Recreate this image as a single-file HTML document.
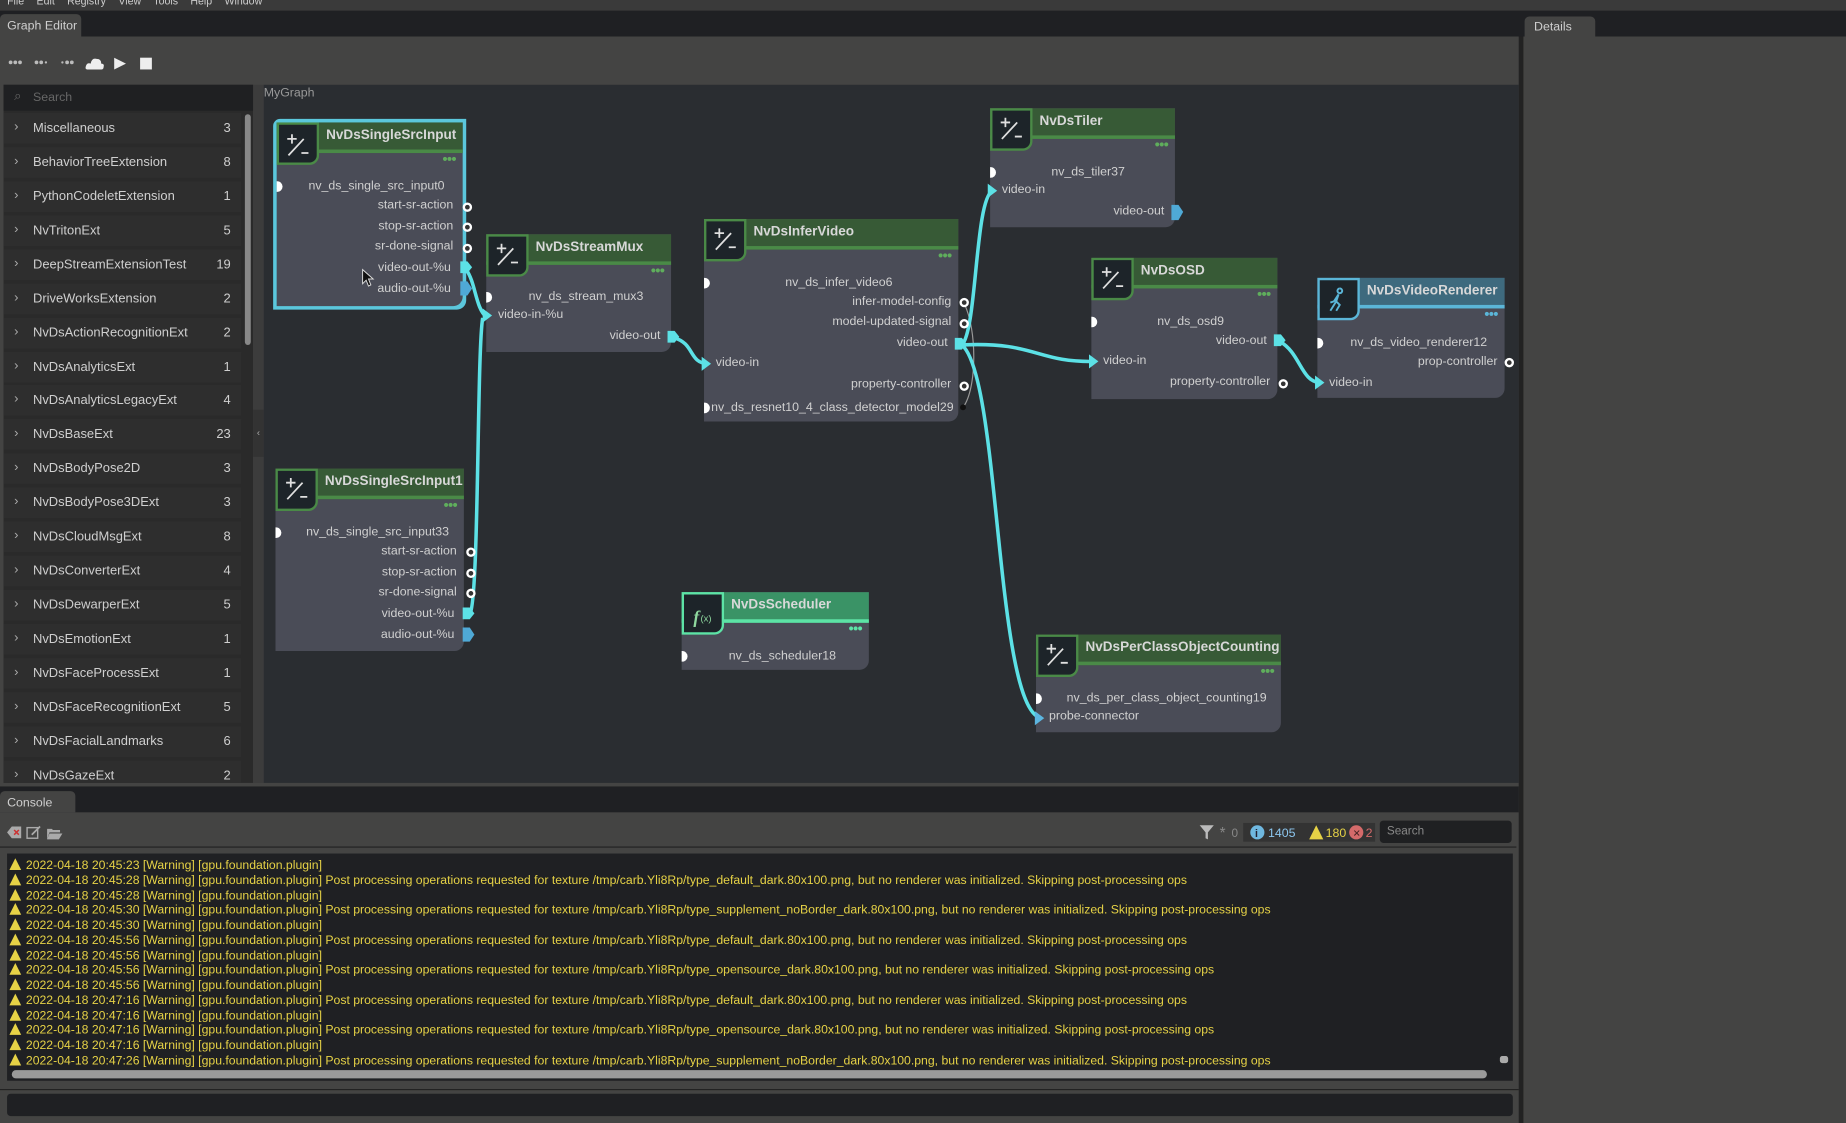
<!DOCTYPE html>
<html><head><meta charset="utf-8"><style>
html,body{margin:0;padding:0;width:1846px;height:1123px;overflow:hidden;background:#444443}
#w{position:absolute;left:0;top:0;width:1568px;height:954px;transform:scale(1.17730);transform-origin:0 0;font-family:"Liberation Sans",sans-serif;color:#cfcfcf;font-size:11px}
.a{position:absolute}
.it{position:absolute;left:3px;width:202px;height:26px;background:#2e2e2e;font-size:11px;color:#cfcfcf}
.it .c{position:absolute;left:9px;top:6px;color:#aaa}
.it .n{position:absolute;left:25px;top:7px}
.it .v{position:absolute;right:9px;top:7px}
.node{position:absolute;background:#4a4c57;border-radius:0 0 8px 0}
.hd{position:absolute;left:0;top:0;right:0;height:23px;background:#375a36;border-bottom:3px solid #4a8a47;color:#d8d8d8;font-weight:bold;font-size:11.5px}
.hd span{position:absolute;left:42px;top:5px}
.ic{position:absolute;left:0;top:0;width:32px;height:32px;background:#1d2429;border:2px solid #4a8a47;border-radius:0 0 8px 0}
.dots{position:absolute;right:6px;top:26px;color:#5fae5c;font-size:8px;letter-spacing:-1px}
.r{position:absolute;font-size:10.5px;color:#d0d0d0;white-space:nowrap}
.rt{text-align:right}
.hi{position:absolute;width:5px;height:9px;background:#fff;border-radius:0 5px 5px 0}
.log{white-space:nowrap;color:#e6d246;font-size:10.4px}
.log div{height:12.77px;line-height:12.77px;overflow:visible}
.log b{display:inline-block;width:0;height:0;border-left:5px solid transparent;border-right:5px solid transparent;border-bottom:10px solid #e6d246;margin-right:4px;vertical-align:-1px}
</style></head><body><div id="w">
<div class="a" style="left:0;top:0;width:1568px;height:9px;background:#3a3a3a;overflow:hidden;font-size:9px;color:#ccc"><span class="a" style="left:6px;top:-4px;word-spacing:8px">File Edit Registry View Tools Help Window</span></div>
<div class="a" style="left:0;top:9px;width:1568px;height:22px;background:#1f2023"></div>
<div class="a" style="left:0;top:12px;width:69px;height:19px;background:#444443;border-radius:4px 4px 0 0"><span class="a" style="left:6px;top:4px;font-size:10.5px">Graph Editor</span></div>
<div class="a" style="left:1295px;top:14px;width:60px;height:17px;background:#444443;border-radius:4px 4px 0 0"><span class="a" style="left:8px;top:3px;font-size:10.5px">Details</span></div>
<div class="a" style="left:1290px;top:31px;width:4px;height:923px;background:#222"></div>
<svg class="a" style="left:6px;top:47px" width="130" height="14">
<g fill="#bbb"><circle cx="3" cy="6" r="1.6"/><circle cx="7" cy="6" r="1.6"/><circle cx="11" cy="6" r="1.6"/><circle cx="25" cy="6" r="1.6"/><circle cx="29" cy="6" r="1.6"/><circle cx="33" cy="6" r="1" /><circle cx="47" cy="6" r="1"/><circle cx="51" cy="6" r="1.6"/><circle cx="55" cy="6" r="1.6"/></g>
<path d="M68 12 Q66 12 67 9 Q68 6 71 7 Q72 2 76 3 Q80 3 80 7 Q83 7 82 10 Q82 12 80 12Z" fill="#eee"/><path d="M91 2 L101 7 L91 12Z" fill="#eee"/><rect x="113" y="2" width="10" height="10" fill="#eee"/></svg>
<div class="a" style="left:3px;top:72px;width:212px;height:593px;background:#2a2a2a"></div>
<div class="a" style="left:3px;top:72px;width:212px;height:22px;background:#1f2022"><span class="a" style="left:9px;top:4px;color:#666;font-size:11px">⌕</span><span class="a" style="left:25px;top:5px;color:#666;font-size:10.5px">Search</span></div>
<div class="a" style="left:208px;top:97px;width:5px;height:196px;background:#888;border-radius:3px"></div>
<div class="a" style="left:215px;top:72px;width:9px;height:593px;background:#3c3c3c"></div>
<div class="a" style="left:215px;top:348px;width:9px;height:40px;background:#333;color:#aaa;font-size:8px;text-align:center;line-height:40px">‹</div>
<div class="it" style="top:96px"><span class="c">›</span><span class="n">Miscellaneous</span><span class="v">3</span></div>
<div class="it" style="top:125px"><span class="c">›</span><span class="n">BehaviorTreeExtension</span><span class="v">8</span></div>
<div class="it" style="top:154px"><span class="c">›</span><span class="n">PythonCodeletExtension</span><span class="v">1</span></div>
<div class="it" style="top:183px"><span class="c">›</span><span class="n">NvTritonExt</span><span class="v">5</span></div>
<div class="it" style="top:212px"><span class="c">›</span><span class="n">DeepStreamExtensionTest</span><span class="v">19</span></div>
<div class="it" style="top:241px"><span class="c">›</span><span class="n">DriveWorksExtension</span><span class="v">2</span></div>
<div class="it" style="top:270px"><span class="c">›</span><span class="n">NvDsActionRecognitionExt</span><span class="v">2</span></div>
<div class="it" style="top:299px"><span class="c">›</span><span class="n">NvDsAnalyticsExt</span><span class="v">1</span></div>
<div class="it" style="top:327px"><span class="c">›</span><span class="n">NvDsAnalyticsLegacyExt</span><span class="v">4</span></div>
<div class="it" style="top:356px"><span class="c">›</span><span class="n">NvDsBaseExt</span><span class="v">23</span></div>
<div class="it" style="top:385px"><span class="c">›</span><span class="n">NvDsBodyPose2D</span><span class="v">3</span></div>
<div class="it" style="top:414px"><span class="c">›</span><span class="n">NvDsBodyPose3DExt</span><span class="v">3</span></div>
<div class="it" style="top:443px"><span class="c">›</span><span class="n">NvDsCloudMsgExt</span><span class="v">8</span></div>
<div class="it" style="top:472px"><span class="c">›</span><span class="n">NvDsConverterExt</span><span class="v">4</span></div>
<div class="it" style="top:501px"><span class="c">›</span><span class="n">NvDsDewarperExt</span><span class="v">5</span></div>
<div class="it" style="top:530px"><span class="c">›</span><span class="n">NvDsEmotionExt</span><span class="v">1</span></div>
<div class="it" style="top:559px"><span class="c">›</span><span class="n">NvDsFaceProcessExt</span><span class="v">1</span></div>
<div class="it" style="top:588px"><span class="c">›</span><span class="n">NvDsFaceRecognitionExt</span><span class="v">5</span></div>
<div class="it" style="top:617px"><span class="c">›</span><span class="n">NvDsFacialLandmarks</span><span class="v">6</span></div>
<div class="it" style="top:646px;height:19px"><span class="c">›</span><span class="n">NvDsGazeExt</span><span class="v">2</span></div>
<div class="a" style="left:224px;top:72px;width:1066px;height:593px;background:#2a2d31"><span class="a" style="left:0;top:1px;color:#999;font-size:10.5px">MyGraph</span></div>

<div class="node" style="left:232px;top:101px;width:164px;height:162px;background:#5bc7dc;border-radius:6px 0 8px 0"></div>
<div class="node" style="left:235px;top:104px;width:158px;height:156px">
<div class="hd"><span>NvDsSingleSrcInput</span></div><div class="ic"></div><div class="dots">●●●</div>
<div class="hi" style="left:0;top:50px"></div><div class="r" style="left:27px;top:48px">nv_ds_single_src_input0</div>
<div class="r rt" style="right:8px;top:64px">start-sr-action</div>
<div class="r rt" style="right:8px;top:82px">stop-sr-action</div>
<div class="r rt" style="right:8px;top:99px">sr-done-signal</div>
<div class="r rt" style="right:10px;top:117px">video-out-%u</div>
<div class="r rt" style="right:10px;top:135px">audio-out-%u</div>
</div>
<div class="node" style="left:413px;top:199px;width:157px;height:100px">
<div class="hd"><span>NvDsStreamMux</span></div><div class="ic"></div><div class="dots">●●●</div>
<div class="hi" style="left:0;top:49px"></div><div class="r" style="left:36px;top:47px">nv_ds_stream_mux3</div>
<div class="r" style="left:10px;top:62px">video-in-%u</div>
<div class="r rt" style="right:9px;top:80px">video-out</div>
</div>
<div class="node" style="left:598px;top:186px;width:216px;height:172px">
<div class="hd"><span>NvDsInferVideo</span></div><div class="ic"></div><div class="dots">●●●</div>
<div class="hi" style="left:0;top:50px"></div><div class="r" style="left:69px;top:48px">nv_ds_infer_video6</div>
<div class="r rt" style="right:6px;top:64px">infer-model-config</div>
<div class="r rt" style="right:6px;top:81px">model-updated-signal</div>
<div class="r rt" style="right:9px;top:99px">video-out</div>
<div class="r" style="left:10px;top:116px">video-in</div>
<div class="r rt" style="right:6px;top:134px">property-controller</div>
<div class="hi" style="left:0;top:156px"></div><div class="r" style="left:6px;top:154px">nv_ds_resnet10_4_class_detector_model29</div>
</div>
<div class="node" style="left:841px;top:92px;width:157px;height:101px">
<div class="hd"><span>NvDsTiler</span></div><div class="ic"></div><div class="dots">●●●</div>
<div class="hi" style="left:0;top:50px"></div><div class="r" style="left:52px;top:48px">nv_ds_tiler37</div>
<div class="r" style="left:10px;top:63px">video-in</div>
<div class="r rt" style="right:9px;top:81px">video-out</div>
</div>
<div class="node" style="left:927px;top:219px;width:158px;height:120px">
<div class="hd"><span>NvDsOSD</span></div><div class="ic"></div><div class="dots">●●●</div>
<div class="hi" style="left:0;top:50px"></div><div class="r" style="left:56px;top:48px">nv_ds_osd9</div>
<div class="r rt" style="right:9px;top:64px">video-out</div>
<div class="r" style="left:10px;top:81px">video-in</div>
<div class="r rt" style="right:6px;top:99px">property-controller</div>
</div>
<div class="node" style="left:1119px;top:236px;width:159px;height:102px">
<div class="hd" style="background:#3e6a7e;border-bottom-color:#5bb6d8"><span>NvDsVideoRenderer</span></div><div class="ic" style="border-color:#5bb6d8"></div><div class="dots" style="color:#5bb6d8">●●●</div>
<div class="hi" style="left:0;top:51px"></div><div class="r" style="left:28px;top:49px">nv_ds_video_renderer12</div>
<div class="r rt" style="right:6px;top:65px">prop-controller</div>
<div class="r" style="left:10px;top:83px">video-in</div>
</div>
<div class="node" style="left:234px;top:398px;width:160px;height:155px">
<div class="hd"><span>NvDsSingleSrcInput1</span></div><div class="ic"></div><div class="dots">●●●</div>
<div class="hi" style="left:0;top:50px"></div><div class="r" style="left:26px;top:48px">nv_ds_single_src_input33</div>
<div class="r rt" style="right:6px;top:64px">start-sr-action</div>
<div class="r rt" style="right:6px;top:82px">stop-sr-action</div>
<div class="r rt" style="right:6px;top:99px">sr-done-signal</div>
<div class="r rt" style="right:8px;top:117px">video-out-%u</div>
<div class="r rt" style="right:8px;top:135px">audio-out-%u</div>
</div>
<div class="node" style="left:579px;top:503px;width:159px;height:66px">
<div class="hd" style="background:#3a9366;border-bottom-color:#5de3a6"><span>NvDsScheduler</span></div><div class="ic" style="border-color:#5de3a6"></div><div class="dots" style="color:#5de3a6">●●●</div>
<div class="hi" style="left:0;top:50px"></div><div class="r" style="left:40px;top:48px">nv_ds_scheduler18</div>
</div>
<div class="node" style="left:880px;top:539px;width:208px;height:83px">
<div class="hd"><span>NvDsPerClassObjectCounting</span></div><div class="ic"></div><div class="dots">●●●</div>
<div class="hi" style="left:0;top:50px"></div><div class="r" style="left:26px;top:48px">nv_ds_per_class_object_counting19</div>
<div class="r" style="left:11px;top:63px">probe-connector</div>
</div>

<svg class="a" style="left:0;top:0" width="1568" height="954">
<g stroke="#e0e0e0" stroke-width="1.5" fill="none">
<path d="M244 118h8M248 114v8M245 132l13-14M256 130h6"/>
<path d="M422 211h8M426 207v8M423 225l13-14M434 223h6"/>
<path d="M607 198h8M611 194v8M608 212l13-14M619 210h6"/>
<path d="M850 104h8M854 100v8M851 118l13-14M862 116h6"/>
<path d="M936 231h8M940 227v8M937 245l13-14M948 243h6"/>
<path d="M243 410h8M247 406v8M244 424l13-14M255 422h6"/>
<path d="M889 551h8M893 547v8M890 565l13-14M901 563h6"/>
</g>
<text x="589" y="529" fill="#8fd99f" font-family="Liberation Serif" font-style="italic" font-size="15" font-weight="bold">f</text><text x="595" y="528" fill="#8fd99f" font-size="8" font-family="Liberation Sans">(x)</text>
<path d="M1138 245a2 2 0 1 0 .1 0M1137 250l-4 6-3 1M1137 250l-2 6 3 3-3 5M1135 256l-5 8" stroke="#5bb6d8" stroke-width="1.6" fill="none"/>
<path d="M819 258 C830 280 830 330 818 346" stroke="#999" stroke-width="1" fill="none"/>
<g stroke="#5ce1e6" stroke-width="3" fill="none">
<path d="M396 229 C404 240 404 262 413 269"/>
<path d="M399 522 C407 510 405 300 410 270"/>
<path d="M573 287 C590 292 585 308 601 309"/>
<path d="M817 293 C830 280 828 170 843 162"/>
<path d="M817 293 C880 290 880 308 930 307"/>
<path d="M817 293 C850 320 845 600 884 610"/>
<path d="M1087 290 C1105 300 1105 325 1122 325"/>
</g>
<g fill="#5ce1e6">
<path d="M410 262l8 6-8 6z"/><path d="M596 303l8 6-8 6z"/><path d="M839 156l8 6-8 6z"/><path d="M925 301l8 6-8 6z"/><path d="M1117 319l8 6-8 6z"/><path d="M879 604l8 6-8 6z" fill="#5cb6e0"/>
<path d="M391 222h6l4 5-4 5h-6z"/><path d="M567 281h6l4 5-4 5h-6z"/><path d="M811 287h6l4 5-4 5h-6z"/><path d="M1082 284h6l4 5-4 5h-6z"/><path d="M393 516h6l4 5-4 5h-6z"/>
</g>
<g fill="#4fa9d6"><path d="M391 239h6l4 6-4 6h-6z"/><path d="M393 533h6l4 6-4 6h-6z"/><path d="M995 174h6l4 6-4 7h-6z"/></g>
<g fill="#333" stroke="#fff" stroke-width="2">
<circle cx="397" cy="176" r="3"/><circle cx="397" cy="193" r="3"/><circle cx="397" cy="211" r="3"/>
<circle cx="400" cy="469" r="3"/><circle cx="400" cy="487" r="3"/><circle cx="400" cy="504" r="3"/>
<circle cx="819" cy="257" r="3"/><circle cx="819" cy="275" r="3"/><circle cx="819" cy="328" r="3"/>
<circle cx="1090" cy="326" r="3"/><circle cx="1282" cy="308" r="3"/>
</g>
<circle cx="818" cy="346" r="2.5" fill="#111"/>
<path d="M308 229v12l3-3 2 5 2-1-2-5h4z" fill="#111" stroke="#ddd" stroke-width=".8"/>
</svg>

<div class="a" style="left:0;top:668px;width:1290px;height:22px;background:#1f2023"></div>
<div class="a" style="left:0;top:672px;width:64px;height:18px;background:#444443;border-radius:4px 4px 0 0"><span class="a" style="left:6px;top:4px;font-size:10.5px">Console</span></div>
<svg class="a" style="left:5px;top:700px" width="50" height="14"><path d="M1 7l4-5h8v10H5z" fill="#aaa"/><path d="M7 5l4 4M11 5l-4 4" stroke="#c33" stroke-width="1.3"/><rect x="18" y="3" width="9" height="9" fill="none" stroke="#aaa" stroke-width="1.2"/><path d="M22 9l7-7" stroke="#aaa" stroke-width="1.5"/><path d="M35 4h4l1 1h6v2h-9l-2 6z M37 8h11l-3 5h-10z" fill="#aaa"/></svg>
<svg class="a" style="left:1018px;top:699px" width="150" height="16"><path d="M1 2h12l-5 6v6l-2-1v-5z" fill="#bbb"/><text x="18" y="13" fill="#888" font-size="13" font-family="Liberation Sans">*</text><text x="28" y="12" fill="#888" font-size="10" font-family="Liberation Sans">0</text><rect x="38" y="0" width="120" height="16" fill="#333"/><circle cx="50" cy="8" r="6" fill="#6fb8e0"/><text x="48" y="12" fill="#223" font-size="9" font-weight="bold" font-family="Liberation Sans">i</text><text x="59" y="12" fill="#8cc6ee" font-size="10.5" font-family="Liberation Sans">1405</text><path d="M94 14l6-12 6 12z" fill="#e6d246"/><text x="108" y="12" fill="#e6d246" font-size="10.5" font-family="Liberation Sans">180</text><circle cx="134" cy="8" r="6" fill="#d46a6a"/><text x="131" y="11.5" fill="#422" font-size="8" font-family="Liberation Sans">✕</text><text x="142" y="12" fill="#d46a6a" font-size="10.5" font-family="Liberation Sans">2</text></svg>
<div class="a" style="left:1172px;top:697px;width:112px;height:19px;background:#1f2022;border-radius:3px"><span class="a" style="left:6px;top:4px;color:#888;font-size:10px">Search</span></div>
<div class="a" style="left:0;top:719px;width:1288px;height:1px;background:#222"></div>
<div class="a" style="left:6px;top:725px;width:1279px;height:193px;background:#1f2023;overflow:hidden">
<div class="a log" style="left:2px;top:4px">
<div><b></b>2022-04-18 20:45:23 [Warning] [gpu.foundation.plugin]</div>
<div><b></b>2022-04-18 20:45:28 [Warning] [gpu.foundation.plugin] Post processing operations requested for texture /tmp/carb.Yli8Rp/type_default_dark.80x100.png, but no renderer was initialized. Skipping post-processing ops</div>
<div><b></b>2022-04-18 20:45:28 [Warning] [gpu.foundation.plugin]</div>
<div><b></b>2022-04-18 20:45:30 [Warning] [gpu.foundation.plugin] Post processing operations requested for texture /tmp/carb.Yli8Rp/type_supplement_noBorder_dark.80x100.png, but no renderer was initialized. Skipping post-processing ops</div>
<div><b></b>2022-04-18 20:45:30 [Warning] [gpu.foundation.plugin]</div>
<div><b></b>2022-04-18 20:45:56 [Warning] [gpu.foundation.plugin] Post processing operations requested for texture /tmp/carb.Yli8Rp/type_default_dark.80x100.png, but no renderer was initialized. Skipping post-processing ops</div>
<div><b></b>2022-04-18 20:45:56 [Warning] [gpu.foundation.plugin]</div>
<div><b></b>2022-04-18 20:45:56 [Warning] [gpu.foundation.plugin] Post processing operations requested for texture /tmp/carb.Yli8Rp/type_opensource_dark.80x100.png, but no renderer was initialized. Skipping post-processing ops</div>
<div><b></b>2022-04-18 20:45:56 [Warning] [gpu.foundation.plugin]</div>
<div><b></b>2022-04-18 20:47:16 [Warning] [gpu.foundation.plugin] Post processing operations requested for texture /tmp/carb.Yli8Rp/type_default_dark.80x100.png, but no renderer was initialized. Skipping post-processing ops</div>
<div><b></b>2022-04-18 20:47:16 [Warning] [gpu.foundation.plugin]</div>
<div><b></b>2022-04-18 20:47:16 [Warning] [gpu.foundation.plugin] Post processing operations requested for texture /tmp/carb.Yli8Rp/type_opensource_dark.80x100.png, but no renderer was initialized. Skipping post-processing ops</div>
<div><b></b>2022-04-18 20:47:16 [Warning] [gpu.foundation.plugin]</div>
<div><b></b>2022-04-18 20:47:26 [Warning] [gpu.foundation.plugin] Post processing operations requested for texture /tmp/carb.Yli8Rp/type_supplement_noBorder_dark.80x100.png, but no renderer was initialized. Skipping post-processing ops</div>
</div>
<div class="a" style="left:4px;top:184px;width:1253px;height:7px;background:#9a9a9a;border-radius:4px"></div>
<div class="a" style="left:1268px;top:172px;width:7px;height:6px;background:#aaa;border-radius:2px"></div>
</div>
<div class="a" style="left:0;top:925px;width:1290px;height:1px;background:#222"></div>
<div class="a" style="left:6px;top:929px;width:1279px;height:19px;background:#1f2023;border-radius:3px"></div>
</div></body></html>
